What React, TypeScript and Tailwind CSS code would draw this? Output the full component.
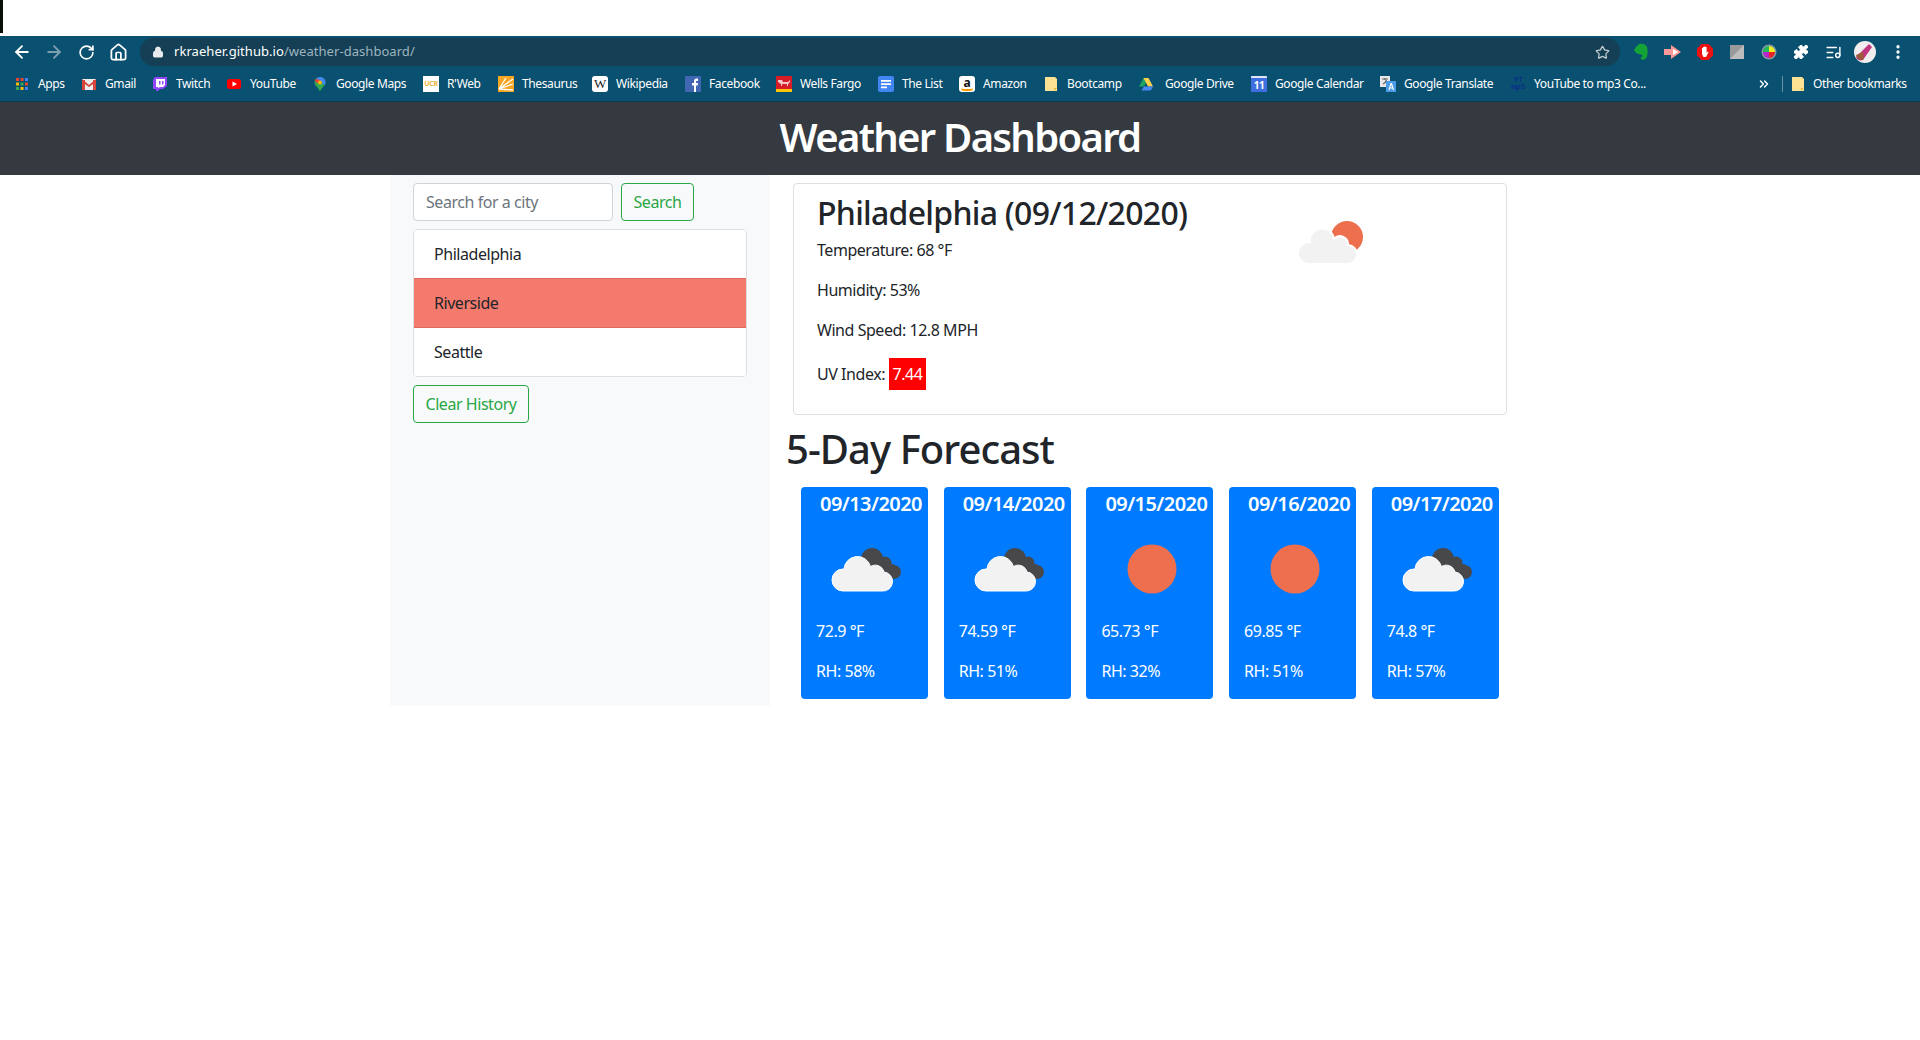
import { ArrowLeft, ArrowRight, House, Lock, MoreVertical, Puzzle, RotateCw, Star, ChevronsRight, ListMusic } from 'lucide-react';
import type { ReactNode } from 'react';

const Folder = () => (
  <svg width="14" height="16" viewBox="0 0 14 16">
    <path d="M1 1h10l2 2v12H1z" fill="#fde293" />
    <path d="M10 15v-3h3z" fill="#e8b93f" />
  </svg>
);

const bookmarks: { label: string; w: string; gap?: string; icon: ReactNode }[] = [
  {
    label: 'Apps',
    w: 'w-[67px]',
    icon: (
      <svg width="16" height="16" viewBox="0 0 16 16">
        <path d="M2 2h3v3H2z" fill="#ea4335" />
        <path d="M6.500 2h3v3h-3z" fill="#ea4335" />
        <path d="M11 2h3v3h-3z" fill="#4285f4" />
        <path d="M2 6.500h3v3H2z" fill="#fbbc05" />
        <path d="M6.500 6.500h3v3h-3z" fill="#34a853" />
        <path d="M11 6.500h3v3h-3z" fill="#ea4335" />
        <path d="M2 11h3v3H2z" fill="#34a853" />
        <path d="M6.500 11h3v3h-3z" fill="#fbbc05" />
        <path d="M11 11h3v3h-3z" fill="#4285f4" />
      </svg>
    ),
  },
  {
    label: 'Gmail',
    w: 'w-[71px]',
    icon: (
      <svg width="16" height="16" viewBox="0 0 16 16">
        <path d="M1 3h14v11H1z" fill="#eee" />
        <path d="M1 3l7 6 7-6v3L8 11 1 6z" fill="#d5453a" />
        <path d="M1 4h3v10H1zM12 4h3v10h-3z" fill="#d5453a" />
      </svg>
    ),
  },
  {
    label: 'Twitch',
    w: 'w-[74px]',
    icon: (
      <svg width="16" height="16" viewBox="0 0 16 16">
        <path d="M3 1h12v9l-4 3H8l-2 2H4v-2H1V4z" fill="#9146ff" />
        <path d="M4 3h9v6l-2 2H8l-2 1v-1H4z" fill="#fff" />
        <path d="M7 5h1.500v3.500H7zM10 5h1.500v3.500H10z" fill="#9146ff" />
      </svg>
    ),
  },
  {
    label: 'YouTube',
    w: 'w-[86px]',
    icon: (
      <svg width="16" height="16" viewBox="0 0 16 16">
        <rect x="1" y="3" width="14" height="10" rx="2.500" fill="#f00" />
        <path d="M6.500 5.500v5L11 8z" fill="#fff" />
      </svg>
    ),
  },
  {
    label: 'Google Maps',
    w: 'w-[111px]',
    icon: (
      <svg width="16" height="16" viewBox="0 0 16 16">
        <path d="M8 1a5.500 5.500 0 0 1 5.500 5.500C13.500 10 9.500 11.500 8 15.500 6.500 11.500 2.500 10 2.500 6.500A5.500 5.500 0 0 1 8 1z" fill="#34a853" />
        <path d="M8 1a5.500 5.500 0 0 1 5.500 5.500c0 1-.3 1.800-.8 2.500L4 3a5.500 5.500 0 0 1 4-2z" fill="#4285f4" />
        <path d="M4 3 2.800 5l3 2.500L8 4z" fill="#ea4335" />
        <circle cx="8" cy="6.500" r="2" fill="#fbbc05" />
      </svg>
    ),
  },
  {
    label: "R'Web",
    w: 'w-[75px]',
    icon: (
      <span className="flex h-4 w-4 items-center justify-center bg-white text-[7px] leading-none font-bold tracking-[-0.3px] text-[#e9b23c]">
        UCR
      </span>
    ),
  },
  {
    label: 'Thesaurus',
    w: 'w-[94px]',
    icon: (
      <svg width="16" height="16" viewBox="0 0 16 16">
        <path d="M0 0h16v16H0z" fill="#f6a623" />
        <path d="M1 13 15 3M1 13l14 1M1 13 15 8M1 13 8 2" stroke="#fff" strokeWidth="1.300" />
      </svg>
    ),
  },
  {
    label: 'Wikipedia',
    w: 'w-[93px]',
    icon: (
      <span className="flex h-4 w-4 items-center justify-center rounded-[3px] bg-white font-['Liberation_Serif',serif] text-[13px] leading-none text-[#222]">
        W
      </span>
    ),
  },
  {
    label: 'Facebook',
    w: 'w-[91px]',
    icon: (
      <svg width="16" height="16" viewBox="0 0 16 16">
        <path d="M0 0h16v16H0z" fill="#4267b2" />
        <path d="M9 16V9.500H7V7h2V5.300C9 3.500 10 2.600 11.700 2.600H13V5h-1c-.7 0-1 .3-1 1v1h2l-.3 2.500H11V16z" fill="#fff" />
      </svg>
    ),
  },
  {
    label: 'Wells Fargo',
    w: 'w-[102px]',
    icon: (
      <svg width="16" height="16" viewBox="0 0 16 16">
        <path d="M0 0h16v13H0z" fill="#d71e28" />
        <path d="M0 13h16v3H0z" fill="#fcc60a" />
        <path d="M2 4h4l1 2h5l2-2v2l-2 2v2h-1V8H6v2H5V8L2 6z" fill="#f6c9cb" />
      </svg>
    ),
  },
  {
    label: 'The List',
    w: 'w-[81px]',
    icon: (
      <svg width="16" height="16" viewBox="0 0 16 16">
        <rect width="16" height="16" rx="2" fill="#4285f4" />
        <path d="M3 4h10v1.800H3zM3 7.200h10V9H3zM3 10.400h6v1.800H3z" fill="#fff" />
      </svg>
    ),
  },
  {
    label: 'Amazon',
    w: 'w-[84px]',
    icon: (
      <span className="relative flex h-4 w-4 justify-center rounded-[3px] bg-white text-[12px] leading-[13px] font-bold text-[#111]">
        a
        <span className="absolute bottom-[1px] left-[2px] h-[3px] w-3 rounded-b-full border-b-2 border-[#f90]" />
      </span>
    ),
  },
  { label: 'Bootcamp', w: 'w-[95px]', icon: <Folder /> },
  {
    label: 'Google Drive',
    w: 'w-[113px]',
    gap: 'gap-[11px]',
    icon: (
      <svg width="16" height="16" viewBox="0 0 16 16">
        <path d="M5.500 2h5L6 10.500H1z" fill="#1ea362" />
        <path d="M5.500 2h5L15 10.500h-5z" fill="#ffd04b" />
        <path d="M3.500 14.500 6 10.500h9l-2.200 4z" fill="#4688f4" />
      </svg>
    ),
  },
  {
    label: 'Google Calendar',
    w: 'w-[129px]',
    icon: (
      <span className="flex h-4 w-4 flex-col overflow-hidden rounded-[1px] bg-[#3d6fe0]">
        <span className="h-[2px] w-full bg-[#dfe6f5]" />
        <span className="text-center text-[10px] leading-[14px] font-bold text-white">11</span>
      </span>
    ),
  },
  {
    label: 'Google Translate',
    w: 'w-[130px]',
    icon: (
      <svg width="16" height="16" viewBox="0 0 16 16">
        <path d="M0 0h10v11H0z" fill="#e8e8e8" />
        <path d="M2 3h6M5 2v2M3 8c2-1 3-2 3.500-4" stroke="#666" strokeWidth="1.200" fill="none" />
        <path d="M6 5h10v11H6z" fill="#4a9be8" />
        <path d="M9 14l2-6.500h.500L13.500 14M10 12h3" stroke="#fff" strokeWidth="1.200" fill="none" />
      </svg>
    ),
  },
  {
    label: 'YouTube to mp3 Co...',
    w: 'w-[135px]',
    icon: (
      <span className="flex h-4 w-4 flex-col items-center font-['Liberation_Mono',monospace] text-[8px] leading-[7px] font-bold text-[#0b2f8a]">
        <span>YT</span>
        <span>mp3</span>
      </span>
    ),
  },
];

const forecast = [
  { date: '09/13/2020', temp: '72.9 °F', rh: 'RH: 58%', sun: false },
  { date: '09/14/2020', temp: '74.59 °F', rh: 'RH: 51%', sun: false },
  { date: '09/15/2020', temp: '65.73 °F', rh: 'RH: 32%', sun: true },
  { date: '09/16/2020', temp: '69.85 °F', rh: 'RH: 51%', sun: true },
  { date: '09/17/2020', temp: '74.8 °F', rh: 'RH: 57%', sun: false },
];

const cloudBody =
  'M27 72a11 11 0 0 1 0-22h1a13.500 13.500 0 0 1 26.500-2.500 9 9 0 0 1 13.500 5.500 9.500 9.500 0 0 1 -2 19z';

function ForecastIcon({ sun }: { sun: boolean }) {
  return (
    <svg width="100" height="100" viewBox="0 0 100 100" className="shrink-0">
      {sun ? (
        <circle cx="51" cy="50" r="24.500" fill="#ed6f4e" />
      ) : (
        <>
          <circle cx="56" cy="40" r="11" fill="#48484a" />
          <circle cx="69" cy="44" r="6.500" fill="#48484a" />
          <circle cx="78" cy="53" r="7" fill="#48484a" />
          <path d="M50 45h28v8H60z" fill="#48484a" />
          <path d={cloudBody} fill="#f2f2f2" stroke="#ffffff" strokeWidth="1" />
        </>
      )}
    </svg>
  );
}

export default function App() {
  return (
    <div className="flex h-[1040px] flex-col overflow-hidden bg-white font-['Noto_Sans','Open_Sans',sans-serif] text-[#212529]">
      <div className="h-[36px] shrink-0 bg-white">
        <div className="h-[33px] w-[3px] bg-[#0a0f05]" />
      </div>

      {/* browser toolbar */}
      <div className="flex h-[30px] shrink-0 items-center bg-[#0a5070] pt-[2px] pl-[12px] text-white">
        <ArrowLeft size={20} strokeWidth={2.2} />
        <ArrowRight size={20} strokeWidth={2.2} className="ml-[12px] text-[#7d9fb0]" />
        <RotateCw size={17} strokeWidth={2.4} className="ml-[14px]" />
        <House size={19} strokeWidth={2.2} className="ml-[14px]" />
        <div className="ml-[12px] flex h-[28px] w-[1480px] items-center rounded-full bg-[#143f55] pl-[12px]">
          <Lock size={12} fill="#e8eaed" strokeWidth={2} className="text-[#e8eaed]" />
          <span className="ml-[10px] text-[13px] tracking-[0.05px]">
            rkraeher.github.io<span className="text-[#9fb4bf]">/weather-dashboard/</span>
          </span>
          <Star size={15} strokeWidth={2} className="mr-[10px] ml-auto text-[#c4ccd1]" />
        </div>
        <div className="ml-[13px] flex items-center">
          <svg width="16" height="18" viewBox="0 0 16 18">
            <path d="M3 4 6 1c3-1 7 0 8 3 1 4 1 9-1 11-1 2-4 2-5 1-1-2 1-3 2-2 0-2-2-3-4-3-2 0-4-2-5-4z" fill="#14a335" />
          </svg>
          <svg width="20" height="16" viewBox="0 0 20 16" className="ml-[14px]">
            <path d="M1 5h7V1l10 7-10 7v-4H1z" fill="#f99" />
            <path d="M10 5l5 3-5 3z" fill="#fff" />
          </svg>
          <svg width="18" height="18" viewBox="0 0 18 18" className="ml-[13px]">
            <path d="M5.500 1h7L17 5.500v7L12.500 17h-7L1 12.500v-7z" fill="#e11" />
            <path d="M6 8V5h1v3-4h1.200v4-4.500h1.200V8 4h1.200v6l1-1.500 1 .5L10 14H7.500L6 11z" fill="#fff" />
          </svg>
          <svg width="14" height="14" viewBox="0 0 14 14" className="ml-[16px]">
            <path d="M0 0h14v14H0z" fill="#9a9a9a" />
            <path d="M14 0v14H0z" fill="#bdbdbd" />
          </svg>
          <svg width="16" height="16" viewBox="0 0 16 16" className="ml-[17px]">
            <circle cx="8" cy="8" r="7.500" fill="#8a9aa3" />
            <circle cx="8" cy="8" r="6" fill="#39c" />
            <path d="M8 8 8 2A6 6 0 0 1 14 8z" fill="#ee2" />
            <path d="M8 8 14 8A6 6 0 0 1 8 14z" fill="#e22" />
            <path d="M8 8 8 14A6 6 0 0 1 2 8z" fill="#b2c" />
            <path d="M8 8 2 8A6 6 0 0 1 8 2z" fill="#2b5" />
          </svg>
          <Puzzle size={16} fill="#fff" strokeWidth={1.5} className="ml-[16px]" />
          <ListMusic size={17} strokeWidth={2} className="ml-[16px]" />
          <svg width="22" height="22" viewBox="0 0 22 22" className="ml-[12px]">
            <circle cx="11" cy="11" r="11" fill="#f0eeee" />
            <path d="M2 16 15 3l3 3-9 13c-3 1-6 0-7-3z" fill="#c2357f" />
            <path d="M2 14l7-3 1 7c-3 2-7 0-8-4z" fill="#9c5a3a" />
          </svg>
          <MoreVertical size={18} strokeWidth={2.4} className="ml-[13px]" />
        </div>
      </div>

      {/* bookmarks bar */}
      <div className="flex h-[36px] shrink-0 items-center border-b border-[#083a52] bg-[#0a5070] pl-[14px] text-[12px] tracking-[-0.38px] text-white">
        {bookmarks.map((b) => (
          <div key={b.label} className={`flex shrink-0 items-center whitespace-nowrap ${b.gap ?? 'gap-[8px]'} ${b.w}`}>
            <span className="flex h-4 w-4 shrink-0 items-center justify-center">{b.icon}</span>
            <span>{b.label}</span>
          </div>
        ))}
        <ChevronsRight size={14} strokeWidth={2.5} className="ml-[112px]" />
        <span className="ml-[11px] h-[16px] w-px bg-[#6b93a6]" />
        <span className="ml-[8px] flex items-center gap-[8px] whitespace-nowrap">
          <Folder />
          Other bookmarks
        </span>
      </div>

      {/* page header */}
      <header className="flex h-[73px] shrink-0 items-center justify-center bg-[#343a40] pb-[4px] text-[40px] font-semibold tracking-[-1.7px] text-white">
        Weather Dashboard
      </header>

      {/* page */}
      <div className="mx-auto flex w-[1140px]">
        <aside className="flex h-[531px] w-[380px] shrink-0 flex-col bg-[#f8f9fa] px-[23px] pt-[8px]">
          <div className="flex gap-[8px]">
            <div className="flex h-[38px] w-[200px] items-center rounded-[4px] border border-[#ced4da] bg-white px-[12px] tracking-[-0.45px] text-[#6c757d]">
              Search for a city
            </div>
            <button className="h-[38px] w-[73px] rounded-[4px] border border-[#28a745] tracking-[-0.45px] text-[#28a745]">
              Search
            </button>
          </div>
          <ul className="mt-[8px] overflow-hidden rounded-[4px] border border-[#dfdfdf] tracking-[-0.45px]">
            <li className="flex h-[48px] items-center bg-white px-[20px]">Philadelphia</li>
            <li className="flex h-[50px] items-center border-y border-[#dd6b60] bg-[#f47a6e] px-[20px]">Riverside</li>
            <li className="flex h-[48px] items-center bg-white px-[20px]">Seattle</li>
          </ul>
          <button className="mt-[8px] h-[38px] w-[116px] rounded-[4px] border border-[#28a745] tracking-[-0.45px] text-[#28a745]">
            Clear History
          </button>
        </aside>

        <main className="w-[760px] pt-[8px]">
          <section className="mx-[23px] flex h-[232px] items-start rounded-[4px] border border-[#dfdfdf] pt-[10px] pl-[23px]">
            <div className="w-[481px] shrink-0 tracking-[-0.45px]">
              <h2 className="text-[32px] leading-[38.400px] font-medium tracking-[-0.72px]">Philadelphia (09/12/2020)</h2>
              <p className="mt-[6px] leading-[24px]">Temperature: 68 °F</p>
              <p className="mt-[16px] leading-[24px]">Humidity: 53%</p>
              <p className="mt-[16px] leading-[24px]">Wind Speed: 12.8 MPH</p>
              <p className="mt-[16px] flex items-center gap-[4px] leading-[32px]">
                UV Index:
                <span className="h-[32px] w-[37px] bg-[#ff0000] text-center text-white">7.44</span>
              </p>
            </div>
            <svg width="66" height="44" viewBox="0 0 66 44" className="mt-[27px] shrink-0">
              <circle cx="49" cy="16" r="16" fill="#ed6f4e" />
              <path d="M11 43a11 11 0 0 1 0-22h1a12 12 0 0 1 24-3 8 8 0 0 1 14 6 9.500 9.500 0 0 1 -1 19z" fill="#f2f2f2" stroke="#fff" strokeWidth="2" />
            </svg>
          </section>

          <h1 className="mt-[10px] pl-[16px] text-[40px] leading-[48px] font-medium tracking-[-0.95px]">5-Day Forecast</h1>

          <div className="mt-[14px] flex gap-[15.700px] pl-[31px]">
            {forecast.map((day) => (
              <article key={day.date} className="h-[212px] w-[127px] shrink-0 rounded-[4px] bg-[#007bff] pl-[15px] text-white">
                <h5 className="ml-[4px] h-[26px] pt-[5px] text-[20px] leading-[24px] font-semibold tracking-[-0.55px] whitespace-nowrap">
                  {day.date}
                </h5>
                <div className="mt-[2px] h-[100px] pt-[4px]">
                  <ForecastIcon sun={day.sun} />
                </div>
                <p className="mt-[4px] leading-[24px] tracking-[-0.45px]">{day.temp}</p>
                <p className="mt-[16px] leading-[24px] tracking-[-0.45px]">{day.rh}</p>
              </article>
            ))}
          </div>
        </main>
      </div>
    </div>
  );
}
